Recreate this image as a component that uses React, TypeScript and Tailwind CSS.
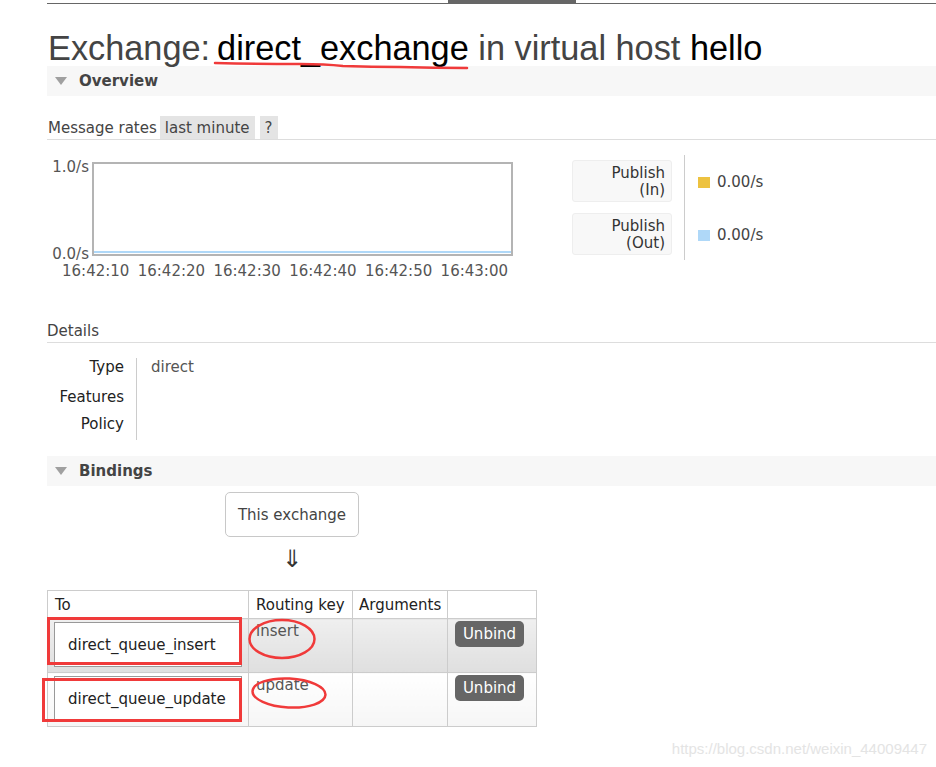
import React from 'react';

const times = ['16:42:10', '16:42:20', '16:42:30', '16:42:40', '16:42:50', '16:43:00'];

const bindings = [
  { queue: 'direct_queue_insert', key: 'insert', alt: true },
  { queue: 'direct_queue_update', key: 'update', alt: false },
];

function Triangle() {
  return (
    <svg width="12" height="8" viewBox="0 0 12 8" className="flex-none">
      <polygon points="0,0 12,0 6,8" fill="#a0a0a0" />
    </svg>
  );
}

function SectionBar({ title }: { title: string }) {
  return (
    <div className="ml-[47px] h-[30px] bg-[#f7f7f7] flex items-center pl-[8px]">
      <Triangle />
      <span className="ml-[12px] pt-[1px] font-bold text-[#444]">{title}</span>
    </div>
  );
}

export default function App() {
  return (
    <div className="relative w-[936px] h-[767px] overflow-hidden bg-white font-['DejaVu_Sans',sans-serif] text-[15px] text-[#444]">
      {/* nav underline */}
      <div className="ml-[47px] h-[4px] flex">
        <div className="w-[401px] border-b border-[#666]" />
        <div className="w-[128px] bg-[#666]" />
        <div className="flex-1 border-b border-[#666]" />
      </div>

      <h1 className="mt-[26px] ml-[48px] text-[34.3px] leading-[36px] font-['Liberation_Sans',Arial,sans-serif] text-[#444]">
        Exchange:<span className="text-black ml-[7px]">direct_exchange</span> in virtual host{' '}
        <span className="text-black">hello</span>
      </h1>

      <SectionBar title="Overview" />

      {/* message rates */}
      <div className="mt-[20px] ml-[47px] flex h-[24px] border-b border-[#ddd] leading-[21px]">
        <span className="pl-[1px] pt-[2px]">Message rates</span>
        <span className="ml-[3px] h-[23px] pt-[2px] px-[5px] bg-[#e4e4e4]">last minute</span>
        <span className="ml-[5px] h-[23px] pt-[2px] px-[5px] bg-[#e4e4e4]">?</span>
      </div>

      <div className="mt-[15px] ml-[47px] flex items-start">
        <div>
          <div className="mt-[4px] flex items-start text-[#555]">
            <div className="w-[42px] h-[103px] flex flex-col justify-between text-right leading-[16px]">
              <span>1.0/s</span>
              <span>0.0/s</span>
            </div>
            <div className="ml-[3px] mt-[3px] w-[421px] h-[94px] border-2 border-[#b4b4b4] flex items-end">
              <div className="w-full h-[2px] mb-[1px] bg-[#afd8f8]" />
            </div>
          </div>
          <div className="ml-[15px] mt-[1px] w-[446px] flex justify-between leading-[16px] text-[#555]">
            {times.map(t => (
              <span key={t}>{t}</span>
            ))}
          </div>
        </div>

        {/* legend */}
        <div className="ml-[59px] flex items-start">
          <div className="mt-[5px] flex flex-col gap-[11px]">
            {['(In)', '(Out)'].map(b => (
              <div
                key={b}
                className="w-[100px] h-[42px] pt-[2px] bg-[#f8f8f8] border border-[#eee] rounded-[3px] flex items-center justify-end pr-[6px] text-[#333]"
              >
                <p className="text-right leading-[17.5px]">
                  Publish
                  <br />
                  {b}
                </p>
              </div>
            ))}
          </div>
          <div className="ml-[12px] h-[105px] border-l border-[#ccc] pl-[13px] pt-[6px] flex flex-col gap-[11px]">
            {['#edc240', '#afd8f8'].map(c => (
              <div key={c} className="h-[42px] flex items-center">
                <span className={c === '#edc240' ? 'w-[12px] h-[11px] bg-[#edc240]' : 'w-[12px] h-[11px] bg-[#afd8f8]'} />
                <span className="ml-[7px]">0.00/s</span>
              </div>
            ))}
          </div>
        </div>
      </div>

      {/* details */}
      <div className="mt-[41px] ml-[47px] h-[23px] leading-[22px] border-b border-[#ddd]">Details</div>
      <div className="mt-[15px] ml-[47px] flex">
        <div className="w-[90px] border-r border-[#ccc] pr-[12px] pt-[1px] text-right text-[#222] leading-[16px] flex flex-col">
          <span className="h-[30px]">Type</span>
          <span className="h-[27px]">Features</span>
          <span className="h-[24px]">Policy</span>
        </div>
        <div className="pl-[14px] pt-[1px] leading-[16px] text-[#555]">direct</div>
      </div>

      <div className="mt-[16px]">
        <SectionBar title="Bindings" />
      </div>

      <div className="mt-[6px] ml-[225px] w-[134px] h-[45px] pt-[2px] border border-[#c8c8c8] rounded-[5px] flex items-center justify-center">
        This exchange
      </div>
      <div className="mt-[8px] ml-[225px] w-[134px] text-center text-[24px] leading-[28px] text-[#333]">⇓</div>

      {/* bindings table */}
      <table className="mt-[17px] ml-[47px] border-collapse table-fixed w-[489px] text-left">
        <colgroup>
          <col className="w-[201px]" />
          <col className="w-[104px]" />
          <col className="w-[95px]" />
          <col className="w-[89px]" />
        </colgroup>
        <thead>
          <tr className="h-[28px]">
            <th className="border border-[#ccc] font-normal text-[#222] pl-[7px] pt-[2px] p-0">To</th>
            <th className="border border-[#ccc] font-normal text-[#222] pl-[7px] pt-[2px] p-0">Routing key</th>
            <th className="border border-[#ccc] font-normal text-[#222] pl-[6px] pt-[2px] p-0">Arguments</th>
            <th className="border border-[#ccc] p-0" />
          </tr>
        </thead>
        <tbody>
          {bindings.map(b => {
            const bg = b.alt
              ? 'border border-[#ccc] align-top p-0 bg-gradient-to-b from-[#efefef] to-[#dfdfdf]'
              : 'border border-[#ccc] align-top p-0 bg-gradient-to-b from-white to-[#f6f6f6]';
            return (
              <tr key={b.queue}>
                <td className={bg}>
                  <div className="pt-[3px] pb-[5px] px-[6px]">
                    <div className="h-[45px] pt-[2px] border border-[#999] bg-white flex items-center pl-[13px] text-[#222]">
                      {b.queue}
                    </div>
                  </div>
                </td>
                <td className={bg}>
                  <div className="pt-[2px] pl-[7px] leading-[20px] text-[#555]">{b.key}</div>
                </td>
                <td className={bg} />
                <td className={bg}>
                  <div className="pt-[2px] pl-[7px]">
                    <button className="w-[69px] h-[26px] pt-[1px] rounded-[5px] bg-[#666] text-white leading-[25px]">
                      Unbind
                    </button>
                  </div>
                </td>
              </tr>
            );
          })}
        </tbody>
      </table>

      {/* red annotations drawn on the screenshot */}
      <svg className="absolute inset-0 pointer-events-none" width="936" height="767" viewBox="0 0 936 767" fill="none">
        <path
          d="M215 63 Q 255 64 300 64 Q 325 64 343 66 Q 372 67 400 67 Q 435 68 467 68"
          stroke="#f03a3a"
          strokeWidth="2.5"
          strokeLinecap="round"
        />
        <rect x="48.5" y="618.5" width="192" height="45" stroke="#f03a3a" strokeWidth="3" />
        <rect x="43.5" y="679.5" width="197" height="41" stroke="#f03a3a" strokeWidth="3" />
        <ellipse cx="282" cy="639" rx="32.5" ry="19" stroke="#f03a3a" strokeWidth="2.5" />
        <ellipse cx="289" cy="693" rx="36.5" ry="14.5" stroke="#f03a3a" strokeWidth="2.5" transform="rotate(3 289 693)" />
      </svg>

      <div className="absolute right-[9px] top-[739px] font-['Liberation_Sans',Arial,sans-serif] text-[15px] leading-[20px] text-[#e4e4e4]">
        https://blog.csdn.net/weixin_44009447
      </div>
    </div>
  );
}
